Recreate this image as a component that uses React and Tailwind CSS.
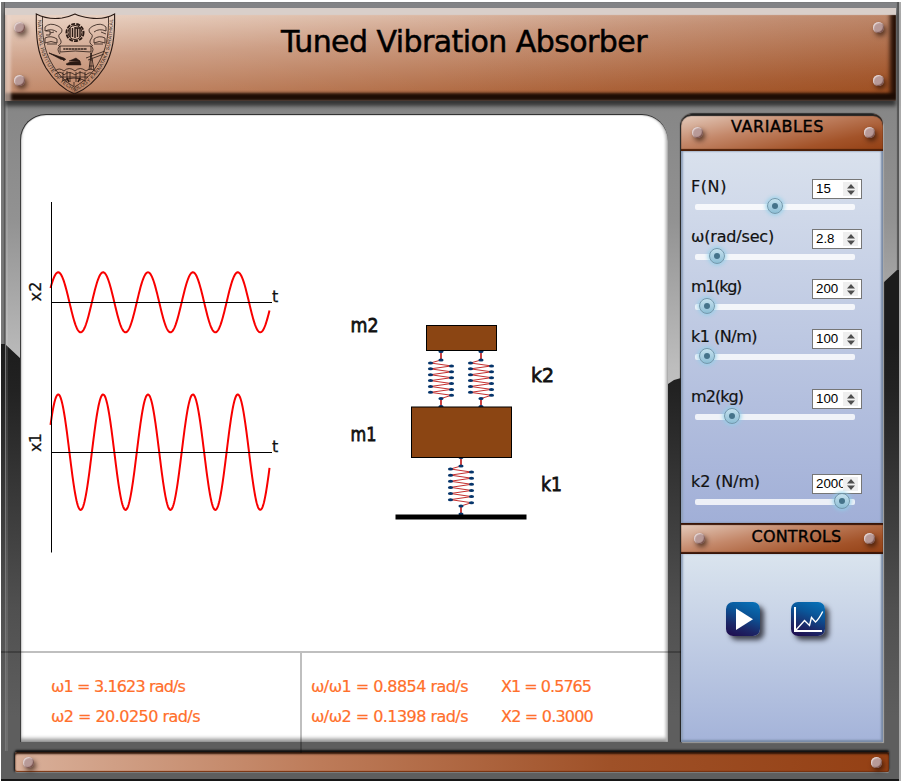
import React, { useLayoutEffect, useRef } from "react";

const comic = "font-['Comic_Sans_MS','DejaVu_Sans',sans-serif]";

// Spreads a single line of text over a fixed width through letter spacing.
function Fit({ width, className = "", children }) {
  const ref = useRef(null);
  useLayoutEffect(() => {
    const el = ref.current;
    el.style.letterSpacing = "0px";
    const natural = el.getBoundingClientRect().width;
    el.style.letterSpacing = (width - natural) / children.length + "px";
  }, [width, children]);
  return (
    <span ref={ref} className={`inline-block whitespace-nowrap ${className}`}>
      {children}
    </span>
  );
}

function Screw() {
  return (
    <span className="block size-[11px] shrink-0 rounded-full bg-[#b89a98] shadow-[inset_1px_1px_1px_#e6d6d4,inset_-1px_-1px_1px_#77504a,2px_3px_5px_rgba(30,10,0,0.65)]" />
  );
}

function Crest() {
  return (
    <svg viewBox="34 12 83 84" className="h-[84px] w-[83px]" fill="none" stroke="#2a1a14" strokeWidth="0.8">
      <path strokeWidth="1.1" d="M36.3 14Q48 20 62 18Q70 16.5 75 14Q80 16.5 90 18Q104 20 114.6 14C115 36 113 53 104 68C97 79 87 89 74.5 94C62 89 53 79 46 68C37 53 36 36 36.3 14Z" />
      <path d="M42.5 17C42 35 44 50 51 62C57 73 64 81 74.5 87C85 81 93 73 99 62C106 50 109 35 108.5 17" />
      <path id="crest-band" stroke="none" d="M37.8 20C38 37 39 52 48.500 67C55 78 64 86 74.500 91.500C86 86 95 78 102 67C110 52 112.500 37 113 19" />
      <text fill="#2a1a14" stroke="none" className="font-['Liberation_Sans',sans-serif] text-[5px]">
        <textPath href="#crest-band" textLength="172">NATIONAL INSTITUTE OF TECHNOLOGY KARNATAKA SURATHKAL</textPath>
      </text>
      <circle cx="75" cy="32.500" r="8.600" strokeWidth="1.800" strokeDasharray="4 1.200" />
      <circle cx="75" cy="32.500" r="7" strokeWidth="1" />
      <path strokeWidth="1.400" d="M70 28V37M72.500 28V37M75 27V38M77.500 28V37M80 28V37M75 28H81" />
      <path d="M45 27Q50 22 58 26Q64 29 61 33Q57 35 60 39Q63 43 58 46M45 27V31Q52 28 57 32M46 31H50V35H46M50 33L54 32M45 38Q51 35 57 39V43Q51 40 45 43ZM47 44H57" />
      <path d="M106 27Q101 22 93 26Q87 29 90 33Q94 35 91 39Q88 43 93 46M106 27V31Q99 28 94 32M101 32L106 34M105 38Q99 35 94 39V43Q99 40 105 43ZM94 44H103" />
      <path d="M60 46H91V52Q75 50 60 52ZM60 46Q56 49 60 54M91 46Q95 49 91 54M64 49H87" />
      <path strokeWidth="1" d="M64 48V50M67 48V50M70 48V50M73 48V50M76 48V50M79 48V50M82 48V50M85 48V50" />
      <path fill="#2a1a14" strokeWidth="0.500" d="M60 57L65 59L64 61ZM66 64L70 62L80 61L81 65H67ZM69 61L76 58L80 61ZM49 53L64 58L66 59.500L61 59.500Z" />
      <path d="M49 53L63 59M86 58L105 51M88 60L104 54M91 53L89 70M91 53L94 70M90 60H93M89 66H94M91 53V70" />
      <path d="M55 71Q59 67 64 71Q69 66 75 71Q80 66 86 71Q91 67 95 71M56 74Q60 70 64 75Q69 70 75 75Q81 70 86 75Q90 71 93 74M60 77H88M63 72V80M67 71V81M70 72V82M76 72V82M80 71V81M85 72V79" />
      <path strokeWidth="1.600" d="M67 78L69 82M80 78L78 82" />
      <path d="M62 81Q74 75 86 81M74 82V86" />
    </svg>
  );
}

function PlateHeader({ title, width, className, textClassName }) {
  return (
    <div
      className={`flex w-[202px] shrink-0 justify-between bg-[linear-gradient(168deg,#e6cfc1_0%,#c4886a_38%,#a35329_75%,#923f13_100%)] ${className}`}
    >
      <Screw />
      <h2 className={`text-[16px] leading-5 text-black [-webkit-text-stroke:0.4px_black] ${comic} ${textClassName}`}>
        <Fit width={width}>{title}</Fit>
      </h2>
      <Screw />
    </div>
  );
}

const variables = [
  { label: "F(N)", width: 36, value: "15", knob: 79.5, gap: "mt-0" },
  { label: "ω(rad/sec)", width: 83, value: "2.8", knob: 21.5, gap: "mt-[19px]" },
  { label: "m1(kg)", width: 50, value: "200", knob: 11.5, gap: "mt-[19px]" },
  { label: "k1 (N/m)", width: 66, value: "100", knob: 11.5, gap: "mt-[19px]" },
  { label: "m2(kg)", width: 52, value: "100", knob: 36.5, gap: "mt-[29px]" },
  { label: "k2 (N/m)", width: 69, value: "2000", knob: 146.5, gap: "mt-[54px]" },
];

function Variable({ label, width, value, knob, gap }) {
  return (
    <div className={gap}>
      <div className="flex h-5 justify-between pr-[21px] pl-[9px]">
        <label className={`text-[16px] leading-4 text-[#111] [-webkit-text-stroke:0.2px_#111] ${comic}`}>
          <Fit width={width}>{label}</Fit>
        </label>
        <div className="flex h-5 w-[50px] items-center border border-[#767676] bg-white px-[3px] font-['Liberation_Sans',Arial,sans-serif] text-[13.33px] text-black">
          <span className="w-[28px] overflow-hidden leading-4">{value}</span>
          <span className="flex h-[14px] w-[15px] shrink-0 items-center justify-center bg-[#efefef]">
            <svg viewBox="0 0 8 11" className="h-[11px] w-2" fill="#4f4f4f">
              <path d="M4 0L8 4.500H0ZM0 6.500H8L4 11Z" />
            </svg>
          </span>
        </div>
      </div>
      <div className="relative mt-[5px] ml-[13px] h-[6px] w-[160px] rounded-[2px] bg-white/80">
        <span
          className="absolute top-[-6px] flex size-4 -translate-x-1/2 items-center justify-center rounded-full border border-[#7199ad] bg-[linear-gradient(#c6e2ef,#8dbed5)] shadow-[0_0_4px_1px_#8fd0ea]"
          style={{ left: knob }}
        >
          <span className="size-[6px] rounded-full bg-[#45738a]" />
        </span>
      </div>
    </div>
  );
}

function wave(mid, amplitude) {
  const points = [];
  for (let x = 50.5; x <= 269.5; x += 0.5) {
    const y = mid - amplitude * Math.cos((2 * Math.PI * (x - 58.2)) / 44.9);
    points.push(`${x},${y.toFixed(2)}`);
  }
  return points.join(" ");
}

function Spring({ x, top, bottom, pitch }) {
  const first = top + 9;
  const pts = [[x, first]];
  for (let i = 0; i < 6; i++) {
    pts.push([x - 10.5, first + 3 + i * pitch]);
    pts.push([x + 10.5, first + 3 + (i + 0.5) * pitch]);
  }
  pts.push([x, bottom - 8.5]);
  const all = [[x, top + 0.5], ...pts, [x, bottom - 0.5]];
  return (
    <g>
      <polyline points={pts.map((p) => p.join(",")).join(" ")} fill="none" stroke="#c43030" strokeWidth="1" />
      <path d={`M${x} ${top}V${first}M${x} ${bottom - 8.5}V${bottom}`} stroke="#c43030" strokeWidth="1.8" />
      {all.map(([cx, cy], i) => (
        <ellipse key={i} cx={cx} cy={cy} rx="2.600" ry="1.500" fill="#06356b" />
      ))}
    </g>
  );
}

function Stage() {
  return (
    <svg viewBox="20 114 648 538" className="block h-[538px] w-[648px]">
      <polyline points={wave(302.3, 30)} fill="none" stroke="#f80000" strokeWidth="2" />
      <polyline points={wave(452.2, 57.7)} fill="none" stroke="#f80000" strokeWidth="2" />
      <path d="M51.5 202V552.500M51 302.500H272M51 452.500H272" stroke="#000" strokeWidth="1" />
      <g className={`text-[16px] ${comic}`} fill="#111" stroke="#111" strokeWidth="0.25">
        <text transform="translate(41 301.500) rotate(-90)" textLength="20">x2</text>
        <text transform="translate(41 452) rotate(-90)" textLength="19">x1</text>
        <text x="272" y="302">t</text>
        <text x="272" y="452">t</text>
      </g>
      <g className={`text-[20px] ${comic}`} fill="#111" stroke="#111" strokeWidth="0.8">
        <text x="350.500" y="332" textLength="28" lengthAdjust="spacingAndGlyphs">m2</text>
        <text x="350.500" y="441" textLength="26" lengthAdjust="spacingAndGlyphs">m1</text>
        <text x="531" y="382" textLength="23" lengthAdjust="spacingAndGlyphs">k2</text>
        <text x="541" y="491" textLength="21" lengthAdjust="spacingAndGlyphs">k1</text>
      </g>
      <Spring x={441} top={351} bottom={407} pitch={5.87} />
      <Spring x={481} top={351} bottom={407} pitch={5.87} />
      <Spring x={461} top={457} bottom={514.5} pitch={6.13} />
      <rect x="426.500" y="325.500" width="70" height="25" fill="#8b4513" stroke="#000" />
      <rect x="411.500" y="407" width="100" height="50.500" fill="#8b4513" stroke="#000" />
      <rect x="395.500" y="514.500" width="131" height="5" fill="#000" />
    </svg>
  );
}

const tile =
  "flex size-[34px] items-center justify-center rounded-[7px] bg-[linear-gradient(200deg,#0774bb_0%,#0a5699_35%,#1c2767_70%,#200a4c_100%)] shadow-[4px_4px_5px_rgba(20,20,30,0.75)]";

export default function App() {
  return (
    <div className="h-[783px] w-[902px] overflow-hidden bg-white pt-[2px] pl-px">
      <div className="relative isolate flex h-[779px] w-[898px] flex-col border-b-2 border-b-[#161616] bg-[linear-gradient(#828386_0%,#858585_12%,#929292_28%,#bdbdbd_47%,#c4c4c4_55%)] shadow-[2px_0_0_#aaa,inset_3px_0_1px_#777,inset_4px_0_0_#555,inset_-2px_0_1px_#555]">
        <div className="absolute inset-0 -z-10 bg-[linear-gradient(#1c1c1c_44%,#222_50%,#505050_78%,#5e5e5e_92%)] [clip-path:polygon(4px_342px,20px_357px,300px_420px,667px_382px,673px_378px,680px_376px,882px_281px,896px_268px,898px_268px,898px_779px,0_779px,0_342px)]" />
        <div className="absolute top-[99px] left-[4px] -z-10 h-[650px] w-[3px] border-l border-[#777] bg-white/10" />

        <header className="mt-[6px] ml-[4px] flex h-[93px] w-[891px] shrink-0 justify-between bg-[linear-gradient(90deg,rgba(255,255,255,0.12)_0%,rgba(255,255,255,0.04)_50%,rgba(120,40,0,0.15)_100%),linear-gradient(177deg,#e6cbba_8%,#c9977c_38%,#ac6238_80%,#a0501f_100%)] pt-[14px] pr-[12px] pb-[15px] pl-[9px] shadow-[inset_0_7px_1px_#d9cfca,inset_6px_0_3px_rgba(235,215,205,0.6),inset_0_-8px_3px_#1d0c04,inset_-6px_0_4px_#2a1207,0_5px_4px_#363636]">
          <div className="flex w-[103px] justify-between">
            <div className="flex flex-col justify-between">
              <Screw />
              <Screw />
            </div>
            <div className="-mt-[10px]">
              <Crest />
            </div>
          </div>
          <h1 className={`mt-[2px] mr-[62px] text-[30px] leading-9 text-black [-webkit-text-stroke:0.5px_black] ${comic}`}>
            <Fit width={366}>Tuned Vibration Absorber</Fit>
          </h1>
          <div className="flex flex-col justify-between">
            <Screw />
            <Screw />
          </div>
        </header>

        <main className="mt-[13px] ml-[19px] flex shrink-0 gap-[13px]">
          <section className="h-[628px] w-[648px] rounded-t-[26px] bg-white shadow-[inset_0_1px_1px_#222,inset_1px_0_1px_#333,inset_-2px_0_3px_#bbb,inset_0_-3px_4px_#888]">
            <Stage />
            <div className={`flex h-[88px] pt-[25px] pl-[31px] text-[16px] leading-[19px] text-[#ff6f2b] [-webkit-text-stroke:0.2px_#ff6f2b] ${comic}`}>
              <div className="flex w-[260px] flex-col items-start gap-[11px]">
                <Fit width={134}>ω1 = 3.1623 rad/s</Fit>
                <Fit width={149}>ω2 = 20.0250 rad/s</Fit>
              </div>
              <div className="flex w-[190px] flex-col items-start gap-[11px]">
                <Fit width={157}>ω/ω1 = 0.8854 rad/s</Fit>
                <Fit width={157}>ω/ω2 = 0.1398 rad/s</Fit>
              </div>
              <div className="flex flex-col items-start gap-[11px]">
                <Fit width={90}>X1 = 0.5765</Fit>
                <Fit width={92}>X2 = 0.3000</Fit>
              </div>
            </div>
          </section>

          <aside className="flex h-[628px] w-[202px] flex-col rounded-t-[12px] shadow-[-1px_0_1px_#222,1px_1px_1px_#aaa,0_-1px_1px_#333]">
            <PlateHeader
              title="VARIABLES"
              width={93}
              className="h-[37px] rounded-t-[10px] pt-[13px] pr-[8px] pl-[11px] shadow-[inset_0_2px_1px_#222,inset_0_-2px_1px_#4d2008]"
              textClassName="-mt-[10px] mr-[12px]"
            />
            <div className="h-[372px] bg-[linear-gradient(#d9e1ed,#a1afd7)] pt-[28px] pl-px shadow-[inset_-2px_0_2px_#7889a5,inset_2px_0_2px_#8fa0ba]">
              {variables.map((v) => (
                <Variable key={v.label} {...v} />
              ))}
            </div>
            <PlateHeader
              title="CONTROLS"
              width={90}
              className="h-[31px] pt-[10px] pr-[8px] pl-[13px] shadow-[inset_0_2px_1px_#391507,inset_0_-2px_1px_#391507]"
              textClassName="-mt-[6px] ml-[24px]"
            />
            <div className="flex h-[188px] gap-[31px] bg-[linear-gradient(#dae4ee,#a4b3d9)] pt-[48px] pl-[45px] shadow-[inset_-2px_-2px_2px_#7889a5,inset_2px_0_2px_#8fa0ba]">
              <button className={tile}>
                <svg viewBox="0 0 34 34" className="size-[34px]" fill="#fff">
                  <path d="M10 6.500V28L27 17.200Z" />
                </svg>
              </button>
              <button className={tile}>
                <svg viewBox="0 0 34 34" className="size-[34px]" fill="none" stroke="#fff">
                  <path strokeWidth="2" d="M4 5V29H31" />
                  <path strokeWidth="1.400" d="M5 28L13.500 18.500L18.500 23.500L20.500 15.500L24.500 20Q28 17 31.700 9.500" />
                </svg>
              </button>
            </div>
          </aside>
        </main>

        <footer className="mt-[10px] ml-[14px] flex h-[20px] w-[874px] shrink-0 items-center justify-between rounded-[2px] bg-[linear-gradient(90deg,#d9b09a_0%,#bd7b59_35%,#9f5128_68%,#944014_100%)] pr-[7px] pl-[8px] shadow-[inset_0_2px_2px_#2b1308,inset_0_-1px_1px_#75310f,0_-2px_2px_#111,-1px_0_2px_#111,0_1px_1px_#aaa]">
          <Screw />
          <Screw />
        </footer>

        {/* Rules that run across the stage and the frame around it */}
        <div className="absolute top-[649px] left-0 h-[2px] w-[680px] bg-black/25" />
        <div className="absolute top-[651px] left-[299px] h-[100px] w-[2px] bg-black/25" />
      </div>
    </div>
  );
}
